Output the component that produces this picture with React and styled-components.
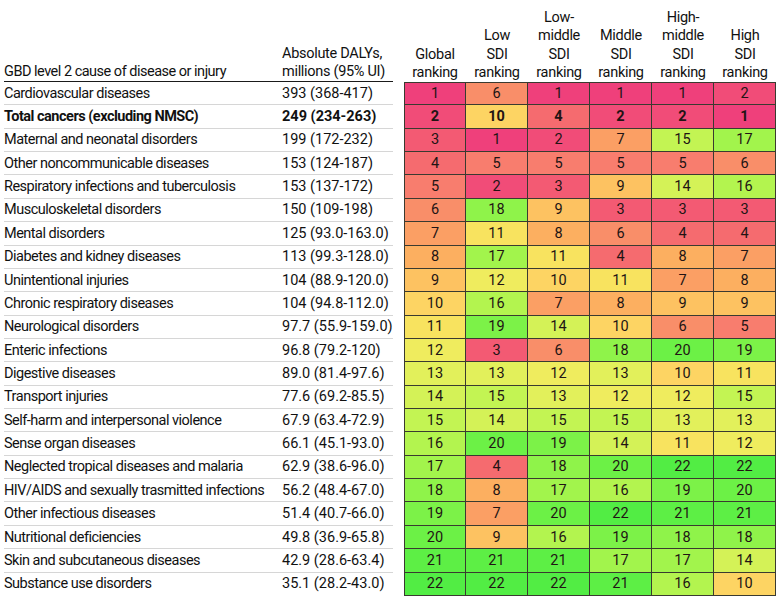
import styled, { createGlobalStyle } from "styled-components";

const GlobalStyle = createGlobalStyle`
  body {
    margin: 0;
    background: #ffffff;
    font-family: "Roboto", "Liberation Sans", sans-serif;
    color: #111;
  }
`;

const COLS = "278px 111px 11px repeat(6, 62px)";

const Page = styled.div`
  width: 780px;
  height: 598px;
  overflow: hidden;
`;

const HeaderRow = styled.div`
  display: grid;
  grid-template-columns: ${COLS};
  padding-left: 4px;
  height: 82px;
  align-items: end;
`;

const HeadLabel = styled.div`
  font-size: 14.5px;
  line-height: 18px;
  letter-spacing: ${(p) => p.$spacing || "0px"};
  height: 100%;
  box-sizing: border-box;
  display: flex;
  flex-direction: column;
  justify-content: flex-end;
  padding-bottom: 0;
  border-bottom: 1.5px solid #1a1a1a;
`;

const HeadRank = styled.div`
  font-size: 14.5px;
  line-height: 18.2px;
  letter-spacing: -0.3px;
  text-align: center;
  margin-bottom: 0;
`;

const Row = styled.div`
  display: grid;
  grid-template-columns: ${COLS};
  padding-left: 4px;
  height: 23.36px;
`;

const TextCell = styled.div`
  font-size: 14.5px;
  font-weight: ${(p) => (p.$bold ? 700 : 400)};
  letter-spacing: ${(p) => p.$spacing || "0px"};
  display: flex;
  align-items: center;
  white-space: nowrap;
  border-bottom: 1px solid ${(p) => (p.$last ? "transparent" : "#d6d6d6")};
  box-sizing: border-box;
`;

const Spacer = styled.div``;

const RankCell = styled.div`
  box-sizing: border-box;
  display: flex;
  align-items: center;
  justify-content: center;
  font-size: 14.5px;
  font-weight: ${(p) => (p.$bold ? 700 : 400)};
  color: #221414;
  background: ${(p) => p.$bg};
  border-right: 1px solid #3a3a30;
  border-bottom: 1px solid #3a3a30;
  border-left: ${(p) => (p.$first ? "1px solid #3a3a30" : "none")};
  border-top: ${(p) => (p.$top ? "1px solid #3a3a30" : "none")};
`;

const PALETTE = [
  null,
  "#ef407b",
  "#f14c78",
  "#f35a73",
  "#f56b6f",
  "#f87d6e",
  "#f98e69",
  "#fb9f64",
  "#fcaf60",
  "#fdc261",
  "#fdd463",
  "#f8e35f",
  "#efec5e",
  "#e2f05b",
  "#d4f257",
  "#c3f453",
  "#b3f44f",
  "#a2f44c",
  "#8ff34a",
  "#7cf248",
  "#6cf146",
  "#5def45",
  "#52ed44",
];

const rows = [
  ["Cardiovascular diseases", "393 (368-417)", [1, 6, 1, 1, 1, 2]],
  ["Total cancers (excluding NMSC)", "249 (234-263)", [2, 10, 4, 2, 2, 1], true],
  ["Maternal and neonatal disorders", "199 (172-232)", [3, 1, 2, 7, 15, 17]],
  ["Other noncommunicable diseases", "153 (124-187)", [4, 5, 5, 5, 5, 6]],
  ["Respiratory infections and tuberculosis", "153 (137-172)", [5, 2, 3, 9, 14, 16]],
  ["Musculoskeletal disorders", "150 (109-198)", [6, 18, 9, 3, 3, 3]],
  ["Mental disorders", "125 (93.0-163.0)", [7, 11, 8, 6, 4, 4]],
  ["Diabetes and kidney diseases", "113 (99.3-128.0)", [8, 17, 11, 4, 8, 7]],
  ["Unintentional injuries", "104 (88.9-120.0)", [9, 12, 10, 11, 7, 8]],
  ["Chronic respiratory diseases", "104 (94.8-112.0)", [10, 16, 7, 8, 9, 9]],
  ["Neurological disorders", "97.7 (55.9-159.0)", [11, 19, 14, 10, 6, 5]],
  ["Enteric infections", "96.8 (79.2-120)", [12, 3, 6, 18, 20, 19]],
  ["Digestive diseases", "89.0 (81.4-97.6)", [13, 13, 12, 13, 10, 11]],
  ["Transport injuries", "77.6 (69.2-85.5)", [14, 15, 13, 12, 12, 15]],
  ["Self-harm and interpersonal violence", "67.9 (63.4-72.9)", [15, 14, 15, 15, 13, 13]],
  ["Sense organ diseases", "66.1 (45.1-93.0)", [16, 20, 19, 14, 11, 12]],
  ["Neglected tropical diseases and malaria", "62.9 (38.6-96.0)", [17, 4, 18, 20, 22, 22]],
  ["HIV/AIDS and sexually trasmitted infections", "56.2 (48.4-67.0)", [18, 8, 17, 16, 19, 20]],
  ["Other infectious diseases", "51.4 (40.7-66.0)", [19, 7, 20, 22, 21, 21]],
  ["Nutritional deficiencies", "49.8 (36.9-65.8)", [20, 9, 16, 19, 18, 18]],
  ["Skin and subcutaneous diseases", "42.9 (28.6-63.4)", [21, 21, 21, 17, 17, 14]],
  ["Substance use disorders", "35.1 (28.2-43.0)", [22, 22, 22, 21, 16, 10]],
];

const rankHeads = [
  ["Global", "ranking"],
  ["Low", "SDI", "ranking"],
  ["Low-", "middle", "SDI", "ranking"],
  ["Middle", "SDI", "ranking"],
  ["High-", "middle", "SDI", "ranking"],
  ["High", "SDI", "ranking"],
];

export default function App() {
  return (
    <Page>
      <GlobalStyle />
      <HeaderRow>
        <HeadLabel $spacing="-0.5px">GBD level 2 cause of disease or injury</HeadLabel>
        <HeadLabel $spacing="-0.3px">
          <span>Absolute DALYs,</span>
          <span>millions (95% UI)</span>
        </HeadLabel>
        <Spacer />
        {rankHeads.map((lines, i) => (
          <HeadRank key={i}>
            {lines.map((l, j) => (
              <div key={j}>{l}</div>
            ))}
          </HeadRank>
        ))}
      </HeaderRow>
      {rows.map(([cause, daly, ranks, bold], i) => {
        const last = i === rows.length - 1;
        return (
          <Row key={cause}>
            <TextCell $bold={bold} $last={last} $spacing="-0.5px">
              {cause}
            </TextCell>
            <TextCell $bold={bold} $last={last}>
              {daly}
            </TextCell>
            <Spacer />
            {ranks.map((r, j) => (
              <RankCell
                key={j}
                $bg={PALETTE[r]}
                $bold={bold}
                $first={j === 0}
                $top={i === 0}
              >
                {r}
              </RankCell>
            ))}
          </Row>
        );
      })}
    </Page>
  );
}
